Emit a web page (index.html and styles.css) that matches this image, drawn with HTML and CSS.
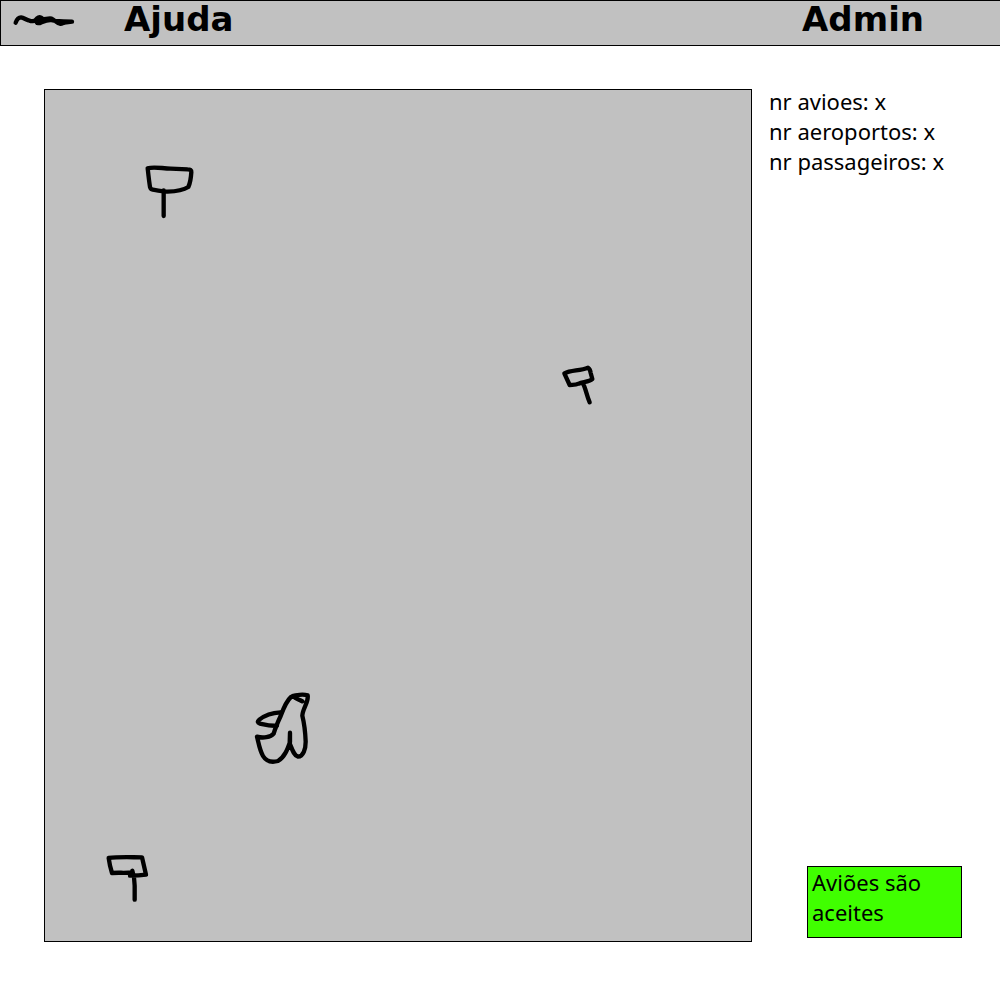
FILE: index.html
```html
<!DOCTYPE html>
<html lang="pt">
<head>
<meta charset="utf-8">
<title>Aeroportos</title>
<link rel="stylesheet" href="styles.css">
</head>
<body>
<header class="topbar">
  <a class="logo" href="#" aria-label="Início">
    <svg width="60" height="14" viewBox="42 42 180 42"><path d="M47 68C50 59 56 52 63 52C72 53 80 61 89 62C98 66 107 61 111 55C117 50 126 51 127 58C128 67 119 71 112 69C106 64 112 58 121 57C132 59 145 54 155 56C164 60 169 69 180 71C186 73 192 66 199 67L216 65L190 64L166 63L151 60C138 60 131 64 124 67"/></svg>
  </a>
  <nav class="menu">
    <a href="#">Ajuda</a>
    <a href="#">Admin</a>
  </nav>
</header>
<main class="content">
  <section class="map" aria-label="Mapa">
    <svg class="pin airport-north" width="80" height="80" viewBox="0 0 240 240"><path d="M53 55C70 49 94 55 122 56L173 58Q185 58 184 66C183 83 181 98 175 111C160 120 137 124 113 125C96 124 80 121 68 119Q62 118 60 111C57 92 55 73 53 55M101 121V198"/></svg>
    <svg class="pin airport-east" width="60" height="60" viewBox="0 0 180 180"><path d="M43 55C64 45 90 48 114 38Q121 43 122 54L127 72C120 80 98 81 86 86C76 91 68 89 59 90ZM99 86C107 99 109 120 119 142"/></svg>
    <svg class="pin plane" width="90" height="100" viewBox="0 0 270 300"><path d="M121 97C99 98 74 106 58 119Q48 127 60 131C74 134 90 139 111 137M187 64C178 58 167 57 161 50L153 51C139 63 130 86 122 108C114 125 106 144 101 161C92 172 69 175 51 170C56 190 59 211 69 228C80 246 99 247 114 243C135 230 143 206 150 186V158L149 190C156 207 162 227 174 230C190 229 197 207 197 185C196 158 193 131 187 107C188 85 207 66 203 46C190 42 166 45 158 48"/></svg>
    <svg class="pin airport-south" width="70" height="70" viewBox="0 0 210 210"><path d="M41 54C70 50 108 52 141 52L153 104C139 106 119 107 105 107M41 54Q44 77 51 99C71 97 91 100 113 97M112 92C117 106 119 120 119 137V179"/></svg>
  </section>
  <aside class="sidebar">
    <ul class="stats">
      <li>nr avioes: x</li>
      <li>nr aeroportos: x</li>
      <li>nr passageiros: x</li>
    </ul>
    <button class="status" type="button">Aviões são aceites</button>
  </aside>
</main>
</body>
</html>
```
FILE: styles.css
```css
* {
  box-sizing: border-box;
}

body {
  display: flex;
  flex-direction: column;
  min-height: 100vh;
  margin: 0;
  background: #fff;
  color: #000;
  font-family: "Noto Sans", sans-serif;
  font-size: 22px;
  line-height: 30px;
}

svg {
  display: block;
  fill: none;
  stroke: #000;
  stroke-width: 13;
  stroke-linecap: round;
  stroke-linejoin: round;
}

.topbar {
  display: flex;
  gap: 50px;
  height: 46px;
  padding: 0 76px 0 13px;
  background: #c1c1c1;
  border: 1px solid #000;
  border-right: 0;
}

.logo {
  padding-top: 13px;
}

.logo svg {
  overflow: visible;
}

.menu {
  display: flex;
  flex: 1;
  justify-content: space-between;
  font-family: "DejaVu Sans", sans-serif;
  font-size: 34px;
  font-weight: bold;
  line-height: 36px;
}

.menu a {
  color: inherit;
  text-decoration: none;
}

.content {
  display: flex;
  flex: 1;
  gap: 17px;
  padding: 43px 38px 58px 44px;
}

.map {
  position: relative;
  flex: 1;
  background: #c1c1c1;
  border: 1px solid #000;
}

.pin {
  position: absolute;
}

.airport-north {
  left: 85px;
  top: 60px;
}

.airport-east {
  left: 505px;
  top: 265px;
}

.plane {
  left: 195px;
  top: 590px;
}

.airport-south {
  left: 50px;
  top: 750px;
}

.sidebar {
  display: flex;
  flex-direction: column;
  justify-content: space-between;
  width: 193px;
  margin-top: -3px;
  padding-bottom: 4px;
}

.stats {
  margin: 0;
  padding: 0;
  list-style: none;
  white-space: nowrap;
}

.status {
  align-self: flex-end;
  width: 155px;
  min-height: 72px;
  padding: 0 4px 10px;
  background: #40ff00;
  border: 1px solid #000;
  color: inherit;
  font: inherit;
  text-align: left;
}
```
